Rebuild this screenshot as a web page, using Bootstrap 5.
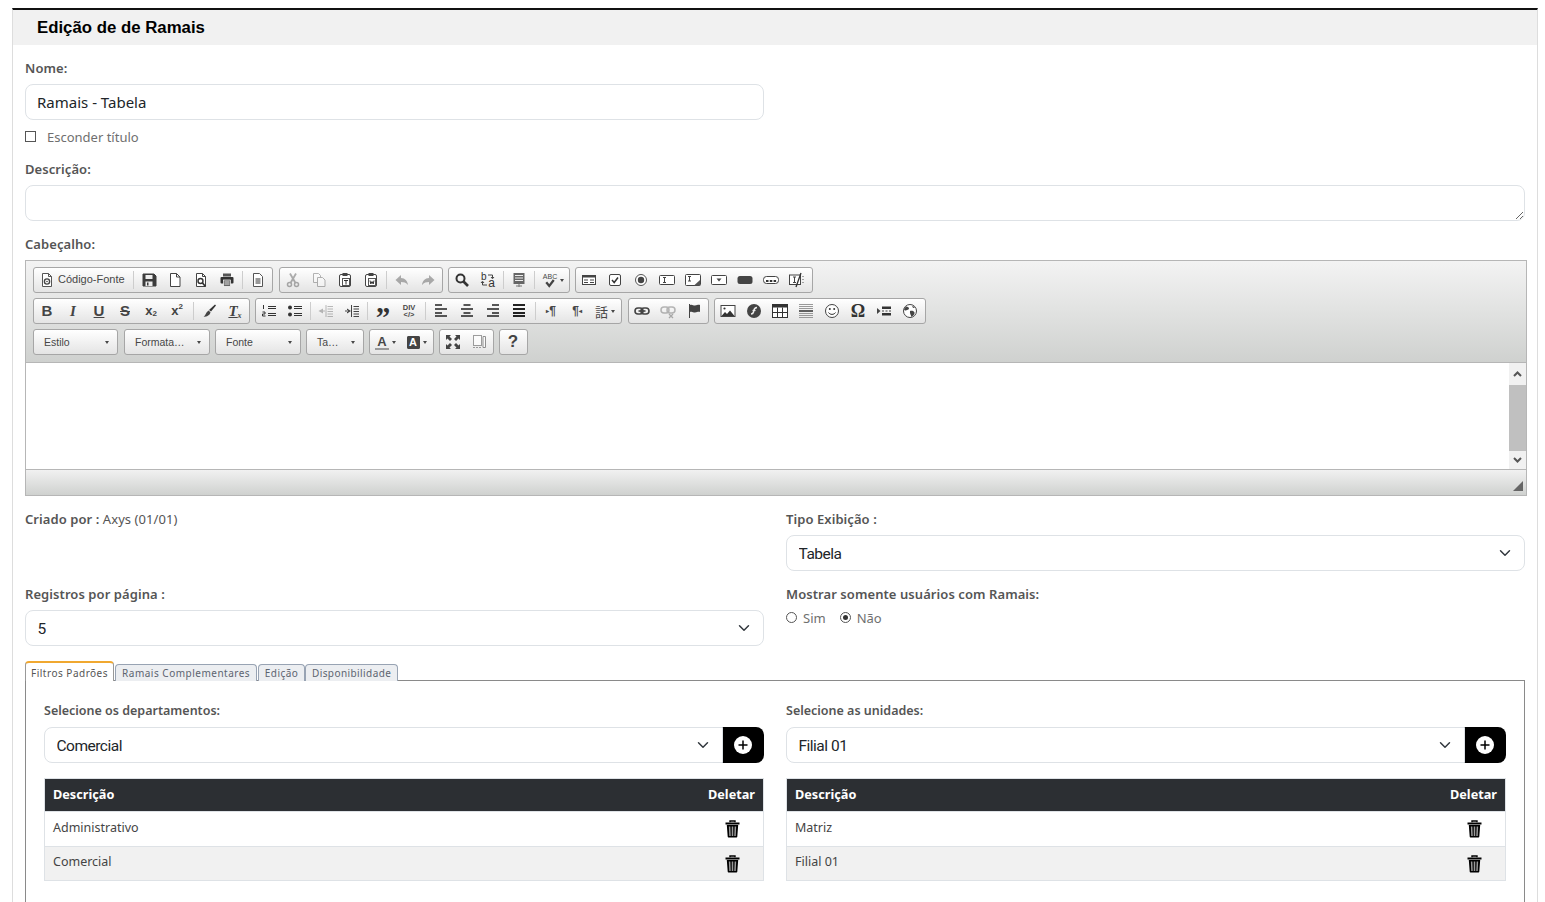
<!DOCTYPE html>
<html lang="pt-BR">
<head>
<meta charset="utf-8">
<title>Edição de de Ramais</title>
<link href="https://cdn.jsdelivr.net/npm/bootstrap@5.3.0/dist/css/bootstrap.min.css" rel="stylesheet">
<style>
html,body{height:902px;overflow:hidden}
body{background:#fff;font-family:"Noto Sans",sans-serif;font-size:13px;color:#555}
.painel{margin:8px 7px 0 12px;border:1px solid #ddd;border-top:2px solid #111;border-bottom:0;min-height:1000px}
.painel-tit{height:35px;background:#f1f1f1;padding:0 24px;display:flex;align-items:center;font:700 16.8px "Liberation Sans",sans-serif;color:#000}
.corpo{padding:13px 12px 0}
.rot{display:block;font-weight:600;color:#555;line-height:20px;margin-bottom:6px;letter-spacing:.07px}
.rot-p{font-size:12.5px;letter-spacing:0}
.campo{height:36px;padding:5px 11px;border-radius:8px;border-color:#dee2e6;font-size:15px;color:#212529;font-family:"Noto Sans",sans-serif}
select.campo{font-family:Roboto,sans-serif;font-size:15.5px;letter-spacing:-.5px;padding:7px 11.5px 3px;background-position:right 11px center}
textarea.campo{min-height:36px}
.row.linha{--bs-gutter-x:22px}
.chk-linha{display:flex;align-items:center;height:20px;margin:7px 0 12px;color:#6f6f6f}
.chk-linha span{position:relative;top:1px}
.chk-linha i{width:11px;height:11px;border:1px solid #555;display:block;margin-right:11px;position:relative;top:-1px}
.bloco{margin-bottom:13px}
.bloco2{margin-bottom:15px}
.radios{display:flex;align-items:center;color:#6f6f6f;height:20px;margin-top:-1px}
.rd{width:11px;height:11px;border:1px solid #555;border-radius:50%;display:block;margin-right:6px;position:relative;top:-2px}
.rd.on::after{content:"";position:absolute;left:2px;top:2px;width:5px;height:5px;border-radius:50%;background:#333}
.rd-t1{margin-right:14px}
/* editor */
.ed{border:1px solid #b6b6b6;margin-right:-2px;background:#fff}
.ed-bar{background:linear-gradient(#f3f3f3,#cfd1cf);padding:6px 7px 7px;border-bottom:1px solid #b6b6b6}
.ed-lin{display:flex;height:26px;margin-bottom:5px}
.ed-lin:last-child{margin-bottom:0}
.grp{display:flex;align-items:center;height:26px;border:1px solid #a6a6a6;border-radius:3px;background:linear-gradient(#fff,#e4e4e4);margin-right:5px;padding-right:1px;flex:none}
.grp.g6{margin-right:6px}
.grp.pd2{padding-right:2px}
.w85{width:85px}.w86{width:86px}.w58{width:58px}
.bt{width:26px;height:24px;display:flex;align-items:center;justify-content:center;flex:none;color:#474747;font-family:"Liberation Sans",sans-serif;position:relative}
.bt>svg{width:16px;height:16px;display:block}
.bt.off{opacity:.35}
.bt.off2{opacity:.7}
.sp{width:1px;height:18px;background:#cdcdcd;flex:none;margin:0 2px}
.sp.s6{margin:0 2px 0 3px}
.fonte{width:97px;justify-content:flex-start;padding-left:5px;font-size:11px;gap:3px}
.fonte svg{flex:none}
.fonte span{position:relative;top:-1px}
.seta{width:0;height:0;border:2.5px solid transparent;border-top:3px solid #474747;border-bottom:0;display:block;margin-left:3px;flex:none}
.cx{display:flex;align-items:center;justify-content:space-between;padding:0 7px 0 10px;font:10.5px "Liberation Sans",sans-serif;color:#474747;width:100%}
.le{font-weight:700;font-size:15px;color:#444}
.lit{font-style:italic;font-family:"Liberation Serif",serif;font-size:15px}
.sub{text-decoration:underline}
.risc{text-decoration:line-through}
.ind{font-size:13px}
.ind small{font-size:8px;position:relative;top:3px}
.ind sup{font-size:8px;top:-4px}
.comp{width:16px;height:16px;position:relative;display:block}
.comp b{position:absolute;font-size:10px;line-height:10px;font-weight:400;color:#333}
.comp .cb{left:1px;top:0}
.comp .ca{right:1px;bottom:0;font-size:12px}
.comp svg{position:absolute;left:0;top:0;width:16px;height:16px}
.larg{width:31px;padding-left:2px}
.larg.lg{width:30px;font:13px "Noto Sans CJK JP",sans-serif;padding-left:0}
.abc{display:flex;flex-direction:column;align-items:center;font-size:7px;line-height:7px;width:14px}
.abc svg{width:12px;height:10px;display:block;margin-top:-2px}
.dv{flex-direction:column;font-size:7.5px;line-height:7.5px;font-weight:700;text-align:center}
.aspas{font:700 29px/1 "Liberation Serif",serif;padding-top:12px;color:#333}
.par{font-size:12px;font-weight:700}
.pt{font-size:6px}
.omega{font:700 18px "Liberation Serif",serif;color:#333}
.cor{width:31px}
.a1{font-size:13px;font-weight:700;border-bottom:2px solid #999;line-height:13px;padding:0 2px}
.a2{font-size:11px;font-weight:700;color:#fff;background:#444;width:13px;height:13px;border-radius:2px;text-align:center;line-height:13px;box-shadow:inset 0 0 0 1px #444}
.aj{font-weight:700;font-size:17px;color:#444}
.ed-area{height:106px;display:flex;justify-content:flex-end}
.rolo{width:17px;background:#f1f1f1;display:flex;flex-direction:column;margin-right:0}
.rolo b{height:22px;display:flex;align-items:center;justify-content:center}
.rolo u{flex:1;background:#c0c0c0;display:block}
.rolo b:last-child{height:18px}
.rolo svg{width:9px;height:6px}
.ed-pe{height:26px;background:linear-gradient(#f1f1f1,#cfd1cf);border-top:1px solid #b6b6b6;display:flex;justify-content:flex-end;align-items:flex-end;padding:0 3px 4px 0}
.ed-pe svg{width:10px;height:10px;display:block}
/* abas */
.abas{display:flex;height:19px;position:relative;z-index:1}
.aba{height:17px;margin-top:3px;margin-right:1px;padding:0 6px;border:1px solid #98a3b3;border-bottom:0;border-radius:4px 4px 0 0;background:#eceef1;font-size:10px;letter-spacing:.5px;line-height:16px;color:#5c6470}
.aba.ativa{height:20px;margin-top:0;border-top:2px solid #f0a830;border-left-color:#999;border-right-color:#999;background:#fff;padding:0 5px;line-height:20px;color:#555;margin-bottom:-1px}
.aba.curta{padding:0 5.5px;margin-right:0}
.aba.fim{letter-spacing:.42px;margin-right:0;padding:0 6px}
.aba-corpo{border:1px solid #8a8a8a;padding:20px 18px 40px}
.bt-add{width:42px;height:36px;background:#000;border:0;border-radius:0 8px 8px 0;display:flex;align-items:center;justify-content:center;padding:0}
.bt-add svg{width:18px;height:18px;display:block}
.tb{margin:15px 0 0;border-color:#dee2e6;font-size:12.5px;color:#444}
.tb thead th{background:#2c2f33;color:#fff;font-weight:700;font-size:12.7px;padding:5px 8px 7px;height:32px;border-color:#dee2e6;line-height:20px;vertical-align:middle}
.tb td{padding:6px 8px;height:35px;line-height:19px;color:#444}
.tb tr.zebra td{background:#f1f1f1;height:34px;padding-top:5px}
.tb .col-del{width:62px;text-align:right;border-left-width:0}
.tb tr>:first-child{border-right-width:0}
.tb td.col-del{text-align:center;padding:8px 0 0 2px}
.tb tr.zebra td.col-del{padding-top:8px}
.lixo{width:17px;height:18px;display:inline-block;vertical-align:top}
</style>
</head>
<body>
<svg width="0" height="0" style="position:absolute">
<defs>
<symbol id="i-src" viewBox="0 0 16 16"><path d="M3.5 1.5h6l3 3v10h-9z" fill="#fff" stroke="#555"/><path d="M9.5 1.5v3h3" fill="none" stroke="#555"/><circle cx="8" cy="9.5" r="2.6" fill="none" stroke="#444" stroke-width="1.4"/><circle cx="8" cy="9.5" r=".8" fill="#444"/></symbol>
<symbol id="i-save" viewBox="0 0 16 16"><path d="M2 2h11l2 2v10H2z" fill="#3c3c3c" stroke="#3c3c3c" stroke-linejoin="round"/><rect x="4.5" y="3" width="7" height="4" fill="#eee"/><rect x="4.5" y="9.5" width="7" height="4.5" fill="#eee"/><rect x="6" y="10.5" width="1.5" height="3" fill="#3c3c3c"/></symbol>
<symbol id="i-new" viewBox="0 0 16 16"><path d="M3.500 1.500h6l3.500 3.500v9.500h-9.500z" fill="#fff" stroke="#444"/><path d="M9.500 1.500V5H13" fill="none" stroke="#444"/></symbol>
<symbol id="i-prev" viewBox="0 0 16 16"><path d="M3.500 1.500h6l3 3v10h-9z" fill="#fff" stroke="#444"/><path d="M9.500 1.500v3h3" fill="none" stroke="#444"/><circle cx="7.500" cy="9" r="2.500" fill="none" stroke="#333" stroke-width="1.400"/><path d="M9.500 11l3 3.500" stroke="#333" stroke-width="1.800"/></symbol>
<symbol id="i-print" viewBox="0 0 16 16"><rect x="4" y="1.500" width="8" height="3" fill="#555"/><rect x="1.500" y="5" width="13" height="6.500" rx="1" fill="#333"/><rect x="4.500" y="8" width="7" height="6.500" fill="#666" stroke="#fff" stroke-width=".7"/><path d="M5.500 10h5M5.500 12h5" stroke="#ddd"/></symbol>
<symbol id="i-tpl" viewBox="0 0 16 16"><path d="M3.500 1.500h6l3 3v10h-9z" fill="#fff" stroke="#555"/><path d="M5.500 7h5M5.500 9h5M5.500 11h5" stroke="#333"/></symbol>
<symbol id="i-cut" viewBox="0 0 16 16"><circle cx="4.500" cy="12.500" r="2" fill="none" stroke="#222" stroke-width="1.500"/><circle cx="11.500" cy="12.500" r="2" fill="none" stroke="#222" stroke-width="1.500"/><path d="M5.500 11L11 1.500M10.500 11L5 1.500" stroke="#222" stroke-width="1.800"/></symbol>
<symbol id="i-copy" viewBox="0 0 16 16"><path d="M2.500 1.500h5l2 2v7h-7z" fill="#fff" stroke="#333"/><path d="M6.500 5.500h5l2.500 2.500v6.500H6.500z" fill="#fff" stroke="#333"/></symbol>
<symbol id="i-paste" viewBox="0 0 16 16"><rect x="2.500" y="2.500" width="11" height="12" rx="1.500" fill="#fff" stroke="#444"/><rect x="5.500" y="1" width="5" height="3" fill="#444"/><rect x="5.500" y="6.500" width="7" height="7" fill="#fff" stroke="#555"/><path d="M7 8.500h4M9 8.500v4" stroke="#333"/></symbol>
<symbol id="i-pastew" viewBox="0 0 16 16"><rect x="2.500" y="2.500" width="11" height="12" rx="1.500" fill="#fff" stroke="#444"/><rect x="5.500" y="1" width="5" height="3" fill="#444"/><rect x="5.500" y="6.500" width="7" height="7" fill="#fff" stroke="#555"/><path d="M7 8.500l.8 3.500L9 9.500l1.200 2.500.8-3.500" fill="none" stroke="#333"/></symbol>
<symbol id="i-undo" viewBox="0 0 16 16"><path d="M7 3L1.500 8 7 13V10c3 0 5 .6 7 3-.5-4-3-7-7-7z" fill="#222"/></symbol>
<symbol id="i-redo" viewBox="0 0 16 16"><path d="M9 3l5.500 5L9 13V10c-3 0-5 .6-7 3 .5-4 3-7 7-7z" fill="#222"/></symbol>
<symbol id="i-find" viewBox="0 0 16 16"><circle cx="6.500" cy="6.500" r="4" fill="none" stroke="#333" stroke-width="2"/><path d="M9.500 9.500l4.500 4.500" stroke="#333" stroke-width="2.600"/></symbol>
<symbol id="i-rep" viewBox="0 0 16 16"><path d="M8 3h4.500v3M11 5l1.500 1.800L14 5M7 13H2.500v-3M1 11l1.500-1.800L4 11" fill="none" stroke="#444"/></symbol>
<symbol id="i-all" viewBox="0 0 16 16"><rect x="2.500" y="1" width="11" height="11" fill="#666"/><path d="M4 3.500h8M4 6h8M4 8.500h8" stroke="#eee"/><path d="M8 12v3M5 14h6" stroke="#777"/></symbol>
<symbol id="i-check" viewBox="0 0 16 12"><path d="M3 5l4 5 6-8" fill="none" stroke="#444" stroke-width="3"/></symbol>
<symbol id="i-form" viewBox="0 0 16 16"><rect x="1.500" y="3.500" width="13" height="9" fill="#fff" stroke="#444"/><rect x="1.500" y="3.500" width="13" height="2" fill="#444"/><path d="M3 8h4M9 8h4M3 10.500h4M9 10.500h4" stroke="#444"/></symbol>
<symbol id="i-cb" viewBox="0 0 16 16"><rect x="2.500" y="2.500" width="11" height="11" rx="1.500" fill="#fff" stroke="#444"/><path d="M5 8l2.200 2.500L11 5.500" fill="none" stroke="#333" stroke-width="1.500"/></symbol>
<symbol id="i-rad" viewBox="0 0 16 16"><circle cx="8" cy="8" r="5.500" fill="#fff" stroke="#555"/><circle cx="8" cy="8" r="3.200" fill="#444"/></symbol>
<symbol id="i-tf" viewBox="0 0 16 16"><rect x=".5" y="3.500" width="15" height="9" rx="1" fill="#fff" stroke="#444"/><path d="M4 5.500h3M5.500 5.500v5M4 10.500h3" stroke="#444"/></symbol>
<symbol id="i-ta" viewBox="0 0 16 16"><rect x=".5" y="2.500" width="15" height="11" rx="1" fill="#fff" stroke="#444"/><path d="M3 4.500h3M4.500 4.500v4.500M3 9h3" stroke="#444"/><path d="M15 8v5.500H9z" fill="#555"/></symbol>
<symbol id="i-sel" viewBox="0 0 16 16"><rect x=".5" y="3.500" width="15" height="9" rx="1" fill="#fff" stroke="#444"/><path d="M8 9.500L5.500 6.500h5z" fill="#444"/></symbol>
<symbol id="i-btn" viewBox="0 0 16 16"><rect x=".5" y="4" width="15" height="8" rx="2.500" fill="#444"/></symbol>
<symbol id="i-ib" viewBox="0 0 16 16"><rect x=".5" y="4.500" width="15" height="7" rx="3" fill="#fff" stroke="#444"/><path d="M3 9h2.500M6.800 9h2.500M10.600 9h2.500" stroke="#333" stroke-width="2"/></symbol>
<symbol id="i-hid" viewBox="0 0 16 16"><rect x=".5" y="3" width="11" height="9.500" fill="#fff" stroke="#444"/><path d="M4 5h3M5.500 5v5.500M4 10.500h3" stroke="#444"/><path d="M12 1L7 15" stroke="#333" stroke-width="1.300"/><path d="M14 4v1M14 7v1M14 10v1" stroke="#555"/></symbol>
<symbol id="i-brush" viewBox="0 0 16 16"><path d="M14 1.500l1 1-5 6-2-1.500z" fill="#333"/><path d="M7.500 7.500l2 1.800C9 12 6 14 2.500 14c2-1.500 2-4 5-6.500z" fill="#444"/></symbol>
<symbol id="i-ol" viewBox="0 0 16 16"><path d="M7 3.500h8M7 5.500h8M7 10.500h8M7 12.500h8" stroke="#333" stroke-width="1.200"/><path d="M2.500 2v4M1.500 9h2.500v2H1.500v2h3" fill="none" stroke="#333"/></symbol>
<symbol id="i-ul" viewBox="0 0 16 16"><path d="M7 3.500h8M7 5.500h8M7 10.500h8M7 12.500h8" stroke="#333" stroke-width="1.200"/><circle cx="3" cy="4.500" r="2" fill="#333"/><circle cx="3" cy="11.500" r="2" fill="#333"/></symbol>
<symbol id="i-out" viewBox="0 0 16 16"><path d="M8 2v12M9.500 3.500H15M9.500 6H15M9.500 8.500H15M9.500 11H15M9.500 13.500H15" stroke="#444"/><path d="M.5 8L5 5.500v5zM1 7.500h6v1H1z" fill="#444"/></symbol>
<symbol id="i-ind" viewBox="0 0 16 16"><path d="M7.500 2v12M9.500 3.500H15M9.500 6H15M9.500 8.500H15M9.500 11H15M9.500 13.500H15" stroke="#444"/><path d="M7 8L3 5.500v5zM1 7.500h3v1H1z" fill="#444"/></symbol>
<symbol id="i-l" viewBox="0 0 16 16"><path d="M2 2.500h7M2 6.500h12M2 10.500h7M2 13.500h12" stroke="#222" stroke-width="1.400" transform="translate(0 -.5)"/></symbol>
<symbol id="i-c" viewBox="0 0 16 16"><path d="M4.500 2.500h7M2 6.500h12M4.500 10.500h7M2 13.500h12" stroke="#222" stroke-width="1.400" transform="translate(0 -.5)"/></symbol>
<symbol id="i-r" viewBox="0 0 16 16"><path d="M7 2.500h7M2 6.500h12M7 10.500h7M2 13.500h12" stroke="#222" stroke-width="1.400" transform="translate(0 -.5)"/></symbol>
<symbol id="i-j" viewBox="0 0 16 16"><path d="M2 2.500h12M2 6.500h12M2 10.500h12M2 13.500h12" stroke="#222" stroke-width="1.800" transform="translate(0 -.5)"/></symbol>
<symbol id="i-link" viewBox="0 0 16 16"><rect x="1" y="5" width="8" height="6" rx="3" fill="none" stroke="#444" stroke-width="1.600"/><rect x="7" y="5" width="8" height="6" rx="3" fill="none" stroke="#444" stroke-width="1.600"/><path d="M4.500 8h7" stroke="#444" stroke-width="1.600"/></symbol>
<symbol id="i-unlink" viewBox="0 0 16 16" opacity=".45"><rect x="1" y="4" width="8" height="6" rx="3" fill="none" stroke="#666" stroke-width="1.500"/><rect x="7" y="4" width="8" height="6" rx="3" fill="none" stroke="#666" stroke-width="1.500"/><path d="M9 11l4 4M13 11l-4 4" stroke="#555" stroke-width="1.300"/></symbol>
<symbol id="i-flag" viewBox="0 0 16 16"><path d="M3.500 1v14" stroke="#444"/><path d="M4 2c2-1 3 .5 5 .5s3-1 5-.5v7c-2-.5-3 .5-5 .5S6 8 4 9z" fill="#444"/></symbol>
<symbol id="i-img" viewBox="0 0 16 16"><rect x="1" y="2.500" width="14" height="11" fill="#fff" stroke="#444"/><path d="M1.500 13l3.500-4 2 2 3-3.500 4.500 5.500z" fill="#333"/><circle cx="4.500" cy="5.500" r="1.100" fill="#333"/></symbol>
<symbol id="i-flash" viewBox="0 0 16 16"><circle cx="8" cy="8" r="7" fill="#444"/><path d="M11 4.500C8 4.500 8 7 7.500 9 7.200 10.500 6.500 11 5 11" fill="none" stroke="#eee" stroke-width="1.500"/><path d="M6.500 7.500h3" stroke="#eee" stroke-width="1.200"/></symbol>
<symbol id="i-tab" viewBox="0 0 16 16"><rect x=".5" y="1.500" width="15" height="13" fill="#fff" stroke="#333"/><rect x=".5" y="1.500" width="15" height="3" fill="#333"/><path d="M5.500 4.500v10M10.500 4.500v10M.5 9.500h15" stroke="#333"/></symbol>
<symbol id="i-hr" viewBox="0 0 16 16"><path d="M1 1.500h14M1 3.500h14M1 5.500h14M1 10.500h14M1 12.500h14M1 14.500h14" stroke="#999"/><path d="M1 8h14" stroke="#222" stroke-width="1.400"/></symbol>
<symbol id="i-smile" viewBox="0 0 16 16"><circle cx="8" cy="8" r="6.500" fill="#fff" stroke="#444"/><circle cx="5.800" cy="6" r="1" fill="#333"/><circle cx="10.200" cy="6" r="1" fill="#333"/><path d="M4.500 9.500c1.500 2.500 5.500 2.500 7 0" fill="none" stroke="#333"/></symbol>
<symbol id="i-pb" viewBox="0 0 16 16"><path d="M1 5l3.500 3L1 11z" fill="#444"/><rect x="6" y="3.500" width="9" height="2.500" fill="#333"/><rect x="6" y="10" width="9" height="2.500" fill="#333"/><path d="M6 8h2M9.500 8h2M13 8h2" stroke="#444"/></symbol>
<symbol id="i-globe" viewBox="0 0 16 16"><circle cx="8" cy="8" r="6.500" fill="#fff" stroke="#444"/><path d="M4 3.500c2 0 3 1 3 2S5 7 4 7.500 2 6.500 2 6zM8 8c2-.5 4 0 4.500 1.500S11 13 9.500 14C9 12 7.500 10.500 8 8zM10 2.500l3 2-2 .5z" fill="#444"/></symbol>
<symbol id="i-max" viewBox="0 0 16 16"><path d="M1 1h5L4.500 2.500 7 5 5 7 2.500 4.500 1 6zM15 1v5l-1.500-1.500L11 7 9 5l2.500-2.500L10 1zM1 15v-5l1.500 1.500L5 9l2 2-2.500 2.500L6 15zM15 15h-5l1.500-1.500L9 11l2-2 2.500 2.500L15 10z" fill="#444"/></symbol>
<symbol id="i-blk" viewBox="0 0 16 16"><rect x="2.500" y="1.500" width="8" height="10" fill="#fff" stroke="#777"/><path d="M2 13.500h9" stroke="#777" stroke-dasharray="2 1"/><path d="M12 2.500h2.500v11H12z" fill="#fff" stroke="#666"/></symbol>
<symbol id="i-up" viewBox="0 0 9 6"><path d="M1 5l3.500-3.500L8 5" fill="none" stroke="#555" stroke-width="2"/></symbol>
<symbol id="i-down" viewBox="0 0 9 6"><path d="M1 1l3.500 3.500L8 1" fill="none" stroke="#555" stroke-width="2"/></symbol>
<symbol id="i-add" viewBox="0 0 18 18"><circle cx="9" cy="9" r="9" fill="#fff"/><path d="M9 4.500v9M4.500 9h9" stroke="#000" stroke-width="1.500"/></symbol>
<symbol id="i-lixo" viewBox="0 0 17 18"><path d="M6 2.200V1h5v1.200" fill="none" stroke="#000" stroke-width="1.400"/><path d="M1.500 2.500h14v2h-14z" fill="#000"/><path d="M2.800 5h11.400l-.9 11.500c0 .7-.5 1.100-1.100 1.100H4.800c-.6 0-1.100-.4-1.100-1.100z" fill="#000"/><path d="M5.600 6.500l.4 9.500M8.500 6.500V16M11.400 6.500l-.4 9.500" stroke="#999" stroke-width="1.500"/></symbol>
</defs>
</svg>

<div class="painel">
  <div class="painel-tit">Edição de de Ramais</div>
  <div class="corpo">
    <label class="rot">Nome:</label>
    <div class="row linha">
      <div class="col-6"><input class="form-control campo" value="Ramais - Tabela"></div>
    </div>
    <div class="chk-linha"><i></i><span>Esconder título</span></div>

    <div class="bloco">
      <label class="rot">Descrição:</label>
      <textarea class="form-control campo"></textarea>
    </div>

    <div class="bloco">
      <label class="rot">Cabeçalho:</label>
      <div class="ed">
        <div class="ed-bar">
          <div class="ed-lin">
            <div class="grp g6">
              <div class="bt fonte"><svg width="16" height="16"><use href="#i-src"/></svg><span>Código-Fonte</span></div><div class="sp"></div>
              <div class="bt"><svg><use href="#i-save"/></svg></div><div class="bt"><svg><use href="#i-new"/></svg></div><div class="bt"><svg><use href="#i-prev"/></svg></div><div class="bt"><svg><use href="#i-print"/></svg></div><div class="sp"></div><div class="bt"><svg><use href="#i-tpl"/></svg></div>
            </div>
            <div class="grp">
              <div class="bt off"><svg><use href="#i-cut"/></svg></div><div class="bt off"><svg><use href="#i-copy"/></svg></div><div class="bt"><svg><use href="#i-paste"/></svg></div><div class="bt"><svg><use href="#i-pastew"/></svg></div><div class="sp"></div><div class="bt off"><svg><use href="#i-undo"/></svg></div><div class="bt off"><svg><use href="#i-redo"/></svg></div>
            </div>
            <div class="grp">
              <div class="bt"><svg><use href="#i-find"/></svg></div>
              <div class="bt"><span class="comp"><svg><use href="#i-rep"/></svg><b class="cb">b</b><b class="ca">a</b></span></div><div class="sp"></div>
              <div class="bt"><svg><use href="#i-all"/></svg></div><div class="sp"></div>
              <div class="bt larg"><span class="abc">ABC<svg><use href="#i-check"/></svg></span><i class="seta"></i></div>
            </div>
            <div class="grp pd2">
              <div class="bt"><svg><use href="#i-form"/></svg></div><div class="bt"><svg><use href="#i-cb"/></svg></div><div class="bt"><svg><use href="#i-rad"/></svg></div><div class="bt"><svg><use href="#i-tf"/></svg></div><div class="bt"><svg><use href="#i-ta"/></svg></div><div class="bt"><svg><use href="#i-sel"/></svg></div><div class="bt"><svg><use href="#i-btn"/></svg></div><div class="bt"><svg><use href="#i-ib"/></svg></div><div class="bt"><svg><use href="#i-hid"/></svg></div>
            </div>
          </div>
          <div class="ed-lin">
            <div class="grp">
              <div class="bt le">B</div><div class="bt le lit">I</div><div class="bt le sub">U</div><div class="bt le risc">S</div><div class="bt le ind">x<small>2</small></div><div class="bt le ind">x<sup>2</sup></div><div class="sp s6"></div><div class="bt"><svg><use href="#i-brush"/></svg></div><div class="bt le lit"><span class="sub">T</span><small class="ind"><small>x</small></small></div>
            </div>
            <div class="grp g6">
              <div class="bt"><svg><use href="#i-ol"/></svg></div><div class="bt"><svg><use href="#i-ul"/></svg></div><div class="sp"></div><div class="bt off"><svg><use href="#i-out"/></svg></div><div class="bt"><svg><use href="#i-ind"/></svg></div><div class="sp"></div>
              <div class="bt aspas">”</div><div class="bt dv"><span>DIV</span><span>&lt;/&gt;</span></div><div class="sp s6"></div>
              <div class="bt"><svg><use href="#i-l"/></svg></div><div class="bt"><svg><use href="#i-c"/></svg></div><div class="bt"><svg><use href="#i-r"/></svg></div><div class="bt"><svg><use href="#i-j"/></svg></div><div class="sp s6"></div>
              <div class="bt par"><span class="pt">▸</span>¶</div><div class="bt par">¶<span class="pt">◂</span></div><div class="bt larg lg"><span>話</span><i class="seta"></i></div>
            </div>
            <div class="grp">
              <div class="bt"><svg><use href="#i-link"/></svg></div><div class="bt"><svg><use href="#i-unlink"/></svg></div><div class="bt"><svg><use href="#i-flag"/></svg></div>
            </div>
            <div class="grp pd2">
              <div class="bt"><svg><use href="#i-img"/></svg></div><div class="bt"><svg><use href="#i-flash"/></svg></div><div class="bt"><svg><use href="#i-tab"/></svg></div><div class="bt"><svg><use href="#i-hr"/></svg></div><div class="bt"><svg><use href="#i-smile"/></svg></div><div class="bt omega">Ω</div><div class="bt"><svg><use href="#i-pb"/></svg></div><div class="bt"><svg><use href="#i-globe"/></svg></div>
            </div>
          </div>
          <div class="ed-lin">
            <div class="grp w85 g6"><div class="cx"><span>Estilo</span><i class="seta"></i></div></div>
            <div class="grp w86"><div class="cx"><span>Formata…</span><i class="seta"></i></div></div>
            <div class="grp w86"><div class="cx"><span>Fonte</span><i class="seta"></i></div></div>
            <div class="grp w58"><div class="cx"><span>Ta…</span><i class="seta"></i></div></div>
            <div class="grp">
              <div class="bt cor"><span class="a1">A</span><i class="seta"></i></div><div class="bt cor"><span class="a2">A</span><i class="seta"></i></div>
            </div>
            <div class="grp">
              <div class="bt"><svg><use href="#i-max"/></svg></div><div class="bt off2"><svg><use href="#i-blk"/></svg></div>
            </div>
            <div class="grp"><div class="bt aj">?</div></div>
          </div>
        </div>
        <div class="ed-area">
          <div class="rolo"><b><svg><use href="#i-up"/></svg></b><u></u><b><svg><use href="#i-down"/></svg></b></div>
        </div>
        <div class="ed-pe"><svg viewBox="0 0 10 10"><path d="M10 0v10H0z" fill="#666"/></svg></div>
      </div>
    </div>

    <div class="row linha">
      <div class="col-6">
        <div class="rot"><b class="fw-semibold">Criado por :</b> <span class="fw-normal">Axys (01/01)</span></div>
      </div>
      <div class="col-6 bloco">
        <label class="rot">Tipo Exibição :</label>
        <select class="form-select campo"><option>Tabela</option></select>
      </div>
    </div>
    <div class="row linha">
      <div class="col-6 bloco2">
        <label class="rot">Registros por página :</label>
        <select class="form-select campo"><option>5</option></select>
      </div>
      <div class="col-6">
        <label class="rot">Mostrar somente usuários com Ramais:</label>
        <div class="radios"><i class="rd"></i><span class="rd-t1">Sim</span><i class="rd on"></i><span>Não</span></div>
      </div>
    </div>

    <div class="abas">
      <div class="aba ativa">Filtros Padrões</div>
      <div class="aba">Ramais Complementares</div>
      <div class="aba curta">Edição</div>
      <div class="aba fim">Disponibilidade</div>
    </div>
    <div class="aba-corpo">
      <div class="row linha">
        <div class="col-6">
          <label class="rot rot-p">Selecione os departamentos:</label>
          <div class="input-group">
            <select class="form-select campo"><option>Comercial</option></select>
            <button class="bt-add" type="button" aria-label="Adicionar"><svg><use href="#i-add"/></svg></button>
          </div>
          <table class="table table-bordered tb">
            <thead><tr><th>Descrição</th><th class="col-del">Deletar</th></tr></thead>
            <tbody>
              <tr><td>Administrativo</td><td class="col-del"><svg class="lixo"><use href="#i-lixo"/></svg></td></tr>
              <tr class="zebra"><td>Comercial</td><td class="col-del"><svg class="lixo"><use href="#i-lixo"/></svg></td></tr>
            </tbody>
          </table>
        </div>
        <div class="col-6">
          <label class="rot rot-p">Selecione as unidades:</label>
          <div class="input-group">
            <select class="form-select campo"><option>Filial 01</option></select>
            <button class="bt-add" type="button" aria-label="Adicionar"><svg><use href="#i-add"/></svg></button>
          </div>
          <table class="table table-bordered tb">
            <thead><tr><th>Descrição</th><th class="col-del">Deletar</th></tr></thead>
            <tbody>
              <tr><td>Matriz</td><td class="col-del"><svg class="lixo"><use href="#i-lixo"/></svg></td></tr>
              <tr class="zebra"><td>Filial 01</td><td class="col-del"><svg class="lixo"><use href="#i-lixo"/></svg></td></tr>
            </tbody>
          </table>
        </div>
      </div>
    </div>
  </div>
</div>
<script src="https://cdn.jsdelivr.net/npm/bootstrap@5.3.0/dist/js/bootstrap.bundle.min.js"></script>
</body>
</html>
